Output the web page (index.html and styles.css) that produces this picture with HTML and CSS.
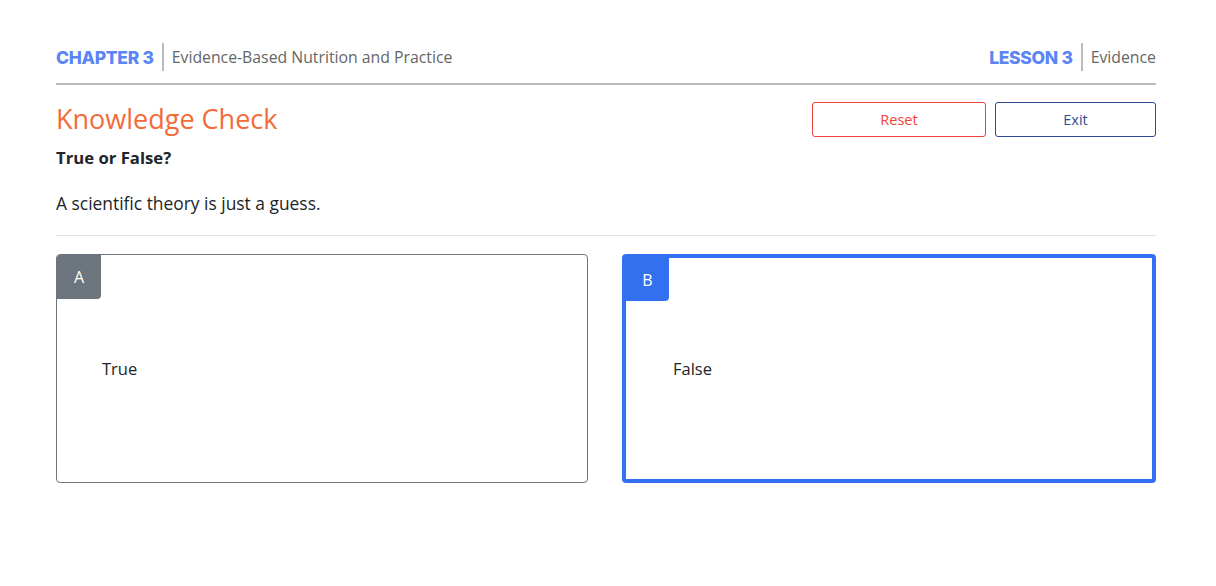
FILE: index.html
```html
<!DOCTYPE html>
<html lang="en">
<head>
<meta charset="utf-8">
<title>Knowledge Check</title>
<link rel="stylesheet" href="styles.css">
</head>
<body>
<div class="page">
  <header class="topbar">
    <div class="crumb">
      <span class="crumb-label">CHAPTER 3</span>
      <span class="crumb-sep"></span>
      <span class="crumb-text">Evidence-Based Nutrition and Practice</span>
    </div>
    <div class="crumb">
      <span class="crumb-label">LESSON 3</span>
      <span class="crumb-sep"></span>
      <span class="crumb-text">Evidence</span>
    </div>
  </header>

  <section class="titlerow">
    <h1 class="title">Knowledge Check</h1>
    <div class="actions">
      <button class="btn btn-reset">Reset</button>
      <button class="btn btn-exit">Exit</button>
    </div>
  </section>

  <div class="qtype">True or False?</div>
  <p class="question">A scientific theory is just a guess.</p>
  <hr class="divider">

  <div class="options">
    <div class="option">
      <span class="badge">A</span>
      <span class="option-text">True</span>
    </div>
    <div class="option option-selected">
      <span class="badge">B</span>
      <span class="option-text">False</span>
    </div>
  </div>
</div>
</body>
</html>
```

FILE: styles.css
```css
* { box-sizing: border-box; }
body {
  margin: 0;
  background: #fff;
  font-family: "Open Sans", "Noto Sans", sans-serif;
  color: #212529;
}
.page {
  width: 1100px;
  margin-left: 56px;
}
.topbar {
  display: flex;
  justify-content: space-between;
  align-items: center;
  padding-top: 43px;
  padding-bottom: 12px;
  border-bottom: 2px solid #bbbbbb;
}
.crumb {
  display: flex;
  align-items: center;
  height: 28px;
}
.crumb-label {
  font-family: "Inter", "Lato", sans-serif;
  font-weight: 800;
  font-size: 17.5px;
  letter-spacing: -0.3px;
  color: #5b85f5;
}
.crumb-sep {
  width: 2px;
  height: 28px;
  background: #bbbbbb;
  margin: 0 8px 0 8px;
}
.crumb-text {
  font-size: 15.8px;
  color: #666;
}
.titlerow {
  display: flex;
  justify-content: space-between;
  align-items: center;
  margin-top: 16px;
}
.title {
  margin: 0;
  font-size: 27px;
  font-weight: 400;
  color: #f26b3a;
  line-height: 36px;
}
.actions {
  display: flex;
  gap: 9px;
}
.btn {
  height: 35px;
  background: #fff;
  border-radius: 3px;
  font-family: "Open Sans", sans-serif;
  font-size: 14.5px;
  cursor: pointer;
}
.btn-reset {
  width: 174px;
  border: 1px solid #f0443a;
  color: #f0443a;
}
.btn-exit {
  width: 161px;
  border: 1px solid #2b4c93;
  color: #2b4c93;
}
.qtype {
  margin-top: 9px;
  font-weight: 700;
  font-size: 16.7px;
  line-height: 24px;
}
.question {
  margin: 21px 0 0 0;
  font-size: 17.4px;
  line-height: 24px;
}
.divider {
  margin: 20px 0 0 0;
  border: 0;
  border-top: 1px solid #e3e3e3;
}
.options {
  display: grid;
  grid-template-columns: 532px 534px;
  column-gap: 34px;
  margin-top: 18px;
}
.option {
  position: relative;
  height: 229px;
  border: 1px solid #6c757d;
  border-radius: 4px;
  display: flex;
  align-items: center;
  padding-left: 45px;
}
.option-selected {
  border: 4px solid #3370f0;
  padding-left: 47px;
}
.badge {
  position: absolute;
  top: 0;
  left: 0;
  width: 44px;
  height: 44px;
  display: flex;
  align-items: center;
  justify-content: center;
  background: #6c757d;
  color: #fff;
  font-size: 16px;
  border-radius: 3px 0 4px 0;
}
.option-selected .badge {
  width: 43px;
  height: 43px;
  background: #3370f0;
  border-radius: 0 0 4px 0;
}
.option-text {
  font-size: 16.5px;
  color: #212529;
}
```
